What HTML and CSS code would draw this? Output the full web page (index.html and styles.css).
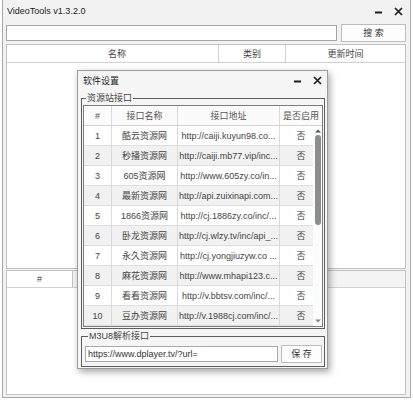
FILE: index.html
```html
<!DOCTYPE html>
<html lang="zh-CN">
<head>
<meta charset="utf-8">
<title>VideoTools v1.3.2.0</title>
<link rel="stylesheet" href="styles.css">
</head>
<body>
<div class="window">
  <div class="titlebar">
    <span class="title">VideoTools v1.3.2.0</span>
    <div class="controls">
      <svg class="ic-min" width="7" height="3" viewBox="0 0 7 3"><rect x="0" y="0.5" width="7" height="2" fill="#1e1e1e"/></svg>
      <svg class="ic-close" width="9" height="9" viewBox="0 0 9 9"><path d="M1 1L8 8M8 1L1 8" stroke="#1e1e1e" stroke-width="1.7"/></svg>
    </div>
  </div>
  <div class="search-row">
    <input class="search-input" type="text" value="">
    <button class="btn search-btn">搜 索</button>
  </div>
  <div class="grid grid-top">
    <div class="head-row top-head">
      <div class="hc c-name">名称</div>
      <div class="hc c-cat">类别</div>
      <div class="hc c-time">更新时间</div>
    </div>
  </div>
  <div class="grid grid-bottom">
    <div class="head-row bottom-head">
      <div class="hc c-num">#</div>
      <div class="hc c-rest"></div>
    </div>
  </div>
</div>

<div class="dialog">
  <div class="dlg-title">
    <span class="dlg-text">软件设置</span>
    <div class="dlg-controls">
      <svg width="7" height="3" viewBox="0 0 7 3"><rect x="0" y="0.5" width="7" height="2" fill="#1e1e1e"/></svg>
      <svg width="9" height="9" viewBox="0 0 9 9"><path d="M1 1L8 8M8 1L1 8" stroke="#1e1e1e" stroke-width="1.7"/></svg>
    </div>
  </div>
  <fieldset class="group group-sites">
    <legend>资源站接口</legend>
    <div class="dtable">
      <div class="drow dhead">
        <div class="dc">#</div>
        <div class="dc">接口名称</div>
        <div class="dc">接口地址</div>
        <div class="dc">是否启用</div>
      </div>
      <div class="drow"><div class="dc">1</div><div class="dc">酷云资源网</div><div class="dc url">http://caiji.kuyun98.co...</div><div class="dc">否</div></div>
      <div class="drow alt"><div class="dc">2</div><div class="dc">秒播资源网</div><div class="dc url">http://caiji.mb77.vip/inc...</div><div class="dc">否</div></div>
      <div class="drow"><div class="dc">3</div><div class="dc">605资源网</div><div class="dc url">http://www.605zy.co/in...</div><div class="dc">否</div></div>
      <div class="drow alt"><div class="dc">4</div><div class="dc">最新资源网</div><div class="dc url">http://api.zuixinapi.com...</div><div class="dc">否</div></div>
      <div class="drow"><div class="dc">5</div><div class="dc">1866资源网</div><div class="dc url">http://cj.1886zy.co/inc/...</div><div class="dc">否</div></div>
      <div class="drow alt"><div class="dc">6</div><div class="dc">卧龙资源网</div><div class="dc url">http://cj.wlzy.tv/inc/api_...</div><div class="dc">否</div></div>
      <div class="drow"><div class="dc">7</div><div class="dc">永久资源网</div><div class="dc url">http://cj.yongjiuzyw.co ...</div><div class="dc">否</div></div>
      <div class="drow alt"><div class="dc">8</div><div class="dc">麻花资源网</div><div class="dc url">http://www.mhapi123.c...</div><div class="dc">否</div></div>
      <div class="drow"><div class="dc">9</div><div class="dc">看看资源网</div><div class="dc url">http://v.bbtsv.com/inc/...</div><div class="dc">否</div></div>
      <div class="drow alt"><div class="dc">10</div><div class="dc">豆办资源网</div><div class="dc url">http://v.1988cj.com/inc/...</div><div class="dc">否</div></div>
      <div class="vscroll">
        <svg class="arr" width="6" height="4" viewBox="0 0 6 4"><path d="M0 3.5L3 0.5L6 3.5Z" fill="#555"/></svg>
        <div class="thumb"></div>
        <div class="spacer"></div>
        <svg class="arr" width="6" height="4" viewBox="0 0 6 4"><path d="M0 0.5L3 3.5L6 0.5Z" fill="#888"/></svg>
      </div>
    </div>
  </fieldset>
  <fieldset class="group group-m3u8">
    <legend>M3U8解析接口</legend>
    <div class="m3u8-row">
      <input class="m3u8-input" type="text" value="https://www.dplayer.tv/?url=">
      <button class="btn save-btn">保 存</button>
    </div>
  </fieldset>
</div>
</body>
</html>
```

FILE: styles.css
```css
* { box-sizing: border-box; }

html, body {
  margin: 0;
  padding: 0;
  background: #ffffff;
}

body {
  position: relative;
  width: 413px;
  height: 402px;
  overflow: hidden;
  font-family: "Liberation Sans", "Noto Sans CJK SC", sans-serif;
  font-size: 9px;
  color: #333;
}

.window {
  margin-left: 2px;
  width: 409px;
  height: 398px;
  border: 1px solid #a9a9a9;
  border-top: none;
  background: #f2f2f2;
  display: flex;
  flex-direction: column;
  padding: 0 4px 2px 3px;
}

.titlebar {
  height: 22px;
  display: flex;
  align-items: center;
  justify-content: space-between;
  padding: 0 3px 0 1px;
}

.title {
  font-size: 9px;
  color: #222;
  line-height: 12px;
}

.controls {
  display: flex;
  align-items: center;
  gap: 12px;
}

.ic-min { margin-top: 3px; }

.search-row {
  margin-top: 2px;
  height: 18px;
  display: flex;
  align-items: center;
  gap: 4px;
}

.search-input {
  width: 331px;
  height: 16px;
  margin: 0;
  border: 1px solid #a6a6a6;
  background: #fff;
  font: inherit;
  padding: 0 2px;
  outline: none;
}

.btn {
  margin: 0;
  padding: 0;
  font-family: "Liberation Sans", "Noto Sans CJK SC", sans-serif;
  font-size: 9px;
  color: #333;
  background: #fdfdfd;
  border: 1px solid #bdbdbd;
  border-radius: 0;
  line-height: 14px;
}

.search-btn {
  width: 65px;
  height: 18px;
}

.grid {
  background: #fff;
  border: 1px solid #c2c2c2;
}

.grid-top {
  margin-top: 2px;
  height: 225px;
}

.grid-bottom {
  margin-top: 1px;
  height: 125px;
}

.head-row {
  display: grid;
  border-bottom: 1px solid #d2d2d2;
  background: #fff;
}

.top-head {
  grid-template-columns: 212px 67px 1fr;
  height: 18px;
}

.bottom-head {
  grid-template-columns: 66px 1fr;
  height: 17px;
  background: #f4f4f4;
}

.hc {
  display: flex;
  align-items: center;
  justify-content: center;
  color: #444;
  border-right: 1px solid #d2d2d2;
  line-height: 12px;
}

.hc:last-child { border-right: none; }

.c-name { padding-left: 9px; }

.c-num {
  background: #fff;
  border-right: 1px solid #c4c4c4;
}

/* dialog */
.dialog {
  position: absolute;
  left: 77px;
  top: 70px;
  width: 251px;
  height: 299px;
  border: 1px solid #9c9c9c;
  background: #f5f5f5;
  box-shadow: 2px 3px 7px rgba(0, 0, 0, 0.35);
  display: flex;
  flex-direction: column;
}

.dlg-title {
  height: 19px;
  display: flex;
  align-items: center;
  justify-content: space-between;
  padding: 0 5px 0 5px;
}

.dlg-text {
  color: #222;
  line-height: 12px;
}

.dlg-controls {
  display: flex;
  align-items: center;
  gap: 12px;
}

.dlg-controls svg:first-child { margin-top: 2px; }

.group {
  margin: 0 2px 0 3px;
  padding: 0 1px 1px 1px;
  border: 1px solid #5e5e5e;
  min-width: 0;
}

.group legend {
  padding: 0 1px;
  margin-left: 3px;
  line-height: 13px;
  font-size: 9px;
  color: #444;
}

.group-sites { margin-top: 2px; }

.group-m3u8 {
  margin-top: 1px;
  padding: 2px 1px 3px 3px;
}

.dtable {
  position: relative;
  width: 240px;
  border: 1px solid #7c7c7c;
  background: #fff;
}

.drow {
  display: grid;
  grid-template-columns: 28px 66px 102px 42px;
  height: 20px;
  border-bottom: 1px solid #dedede;
}

.drow:last-of-type { border-bottom: none; }

.dhead {
  height: 20px;
  background: #fbfbfb;
  border-bottom: 1px solid #d4d4d4;
}

.drow.alt { background: #f1f1f1; }

.dc {
  display: flex;
  align-items: center;
  justify-content: center;
  border-right: 1px solid #dadada;
  color: #444;
  line-height: 12px;
  white-space: nowrap;
  overflow: hidden;
}

.dc:last-child { border-right: none; }

.dhead .dc { color: #555; }

.dc.url {
  justify-content: center;
  letter-spacing: 0;
}

.vscroll {
  position: absolute;
  right: 0;
  top: 20px;
  bottom: 0;
  width: 9px;
  background: #fcfcfc;
  display: flex;
  flex-direction: column;
  align-items: center;
  padding: 3px 0 3px 0;
}

.vscroll .thumb {
  margin-top: 2px;
  width: 6px;
  height: 90px;
  border-radius: 3px;
  background: #8d8d8d;
}

.vscroll .spacer { flex: 1; }

.m3u8-row {
  display: flex;
  align-items: center;
  gap: 3px;
  height: 18px;
}

.m3u8-input {
  width: 193px;
  height: 16px;
  margin: 0;
  padding: 0 2px;
  border: 1px solid #a8a8a8;
  background: #fff;
  font-family: "Liberation Sans", "Noto Sans CJK SC", sans-serif;
  font-size: 9px;
  color: #333;
  outline: none;
}

.save-btn {
  width: 41px;
  height: 18px;
}
```
